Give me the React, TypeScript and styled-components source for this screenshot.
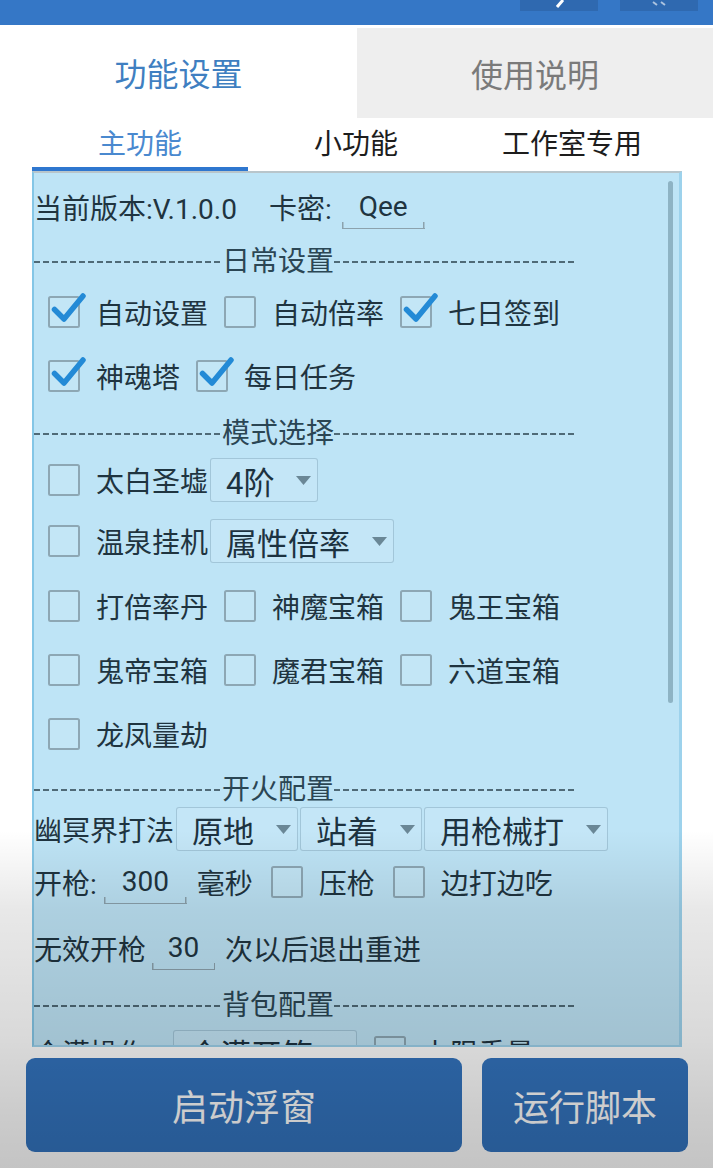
import React from 'react';
import styled, { createGlobalStyle } from 'styled-components';

const Global = createGlobalStyle`
  html, body { margin: 0; padding: 0; background: #ffffff; }
  body { font-family: Roboto, "Noto Sans CJK SC", sans-serif; }
  * { box-sizing: border-box; }
`;

const Page = styled.div`
  position: relative;
  width: 713px;
  height: 1168px;
  overflow: hidden;
  background: #ffffff;
  display: flex;
  flex-direction: column;
`;

const Shade = styled.div`
  position: absolute;
  inset: 0;
  pointer-events: none;
  background: linear-gradient(
    to bottom,
    rgba(0, 0, 0, 0) 0px,
    rgba(0, 0, 0, 0) 830px,
    rgba(0, 0, 0, 0.09) 910px,
    rgba(0, 0, 0, 0.15) 1040px,
    rgba(0, 0, 0, 0.2) 1110px,
    rgba(0, 0, 0, 0.23) 1168px
  );
`;

const TitleBar = styled.div`
  flex: 0 0 25px;
  background: #3577c6;
  display: flex;
  justify-content: flex-end;
  gap: 22px;
  padding-right: 15px;
`;

const TitleButton = styled.div`
  width: 78px;
  height: 11px;
  background: #2f69b0;
  display: flex;
  justify-content: center;
`;

const TabHeader = styled.div`
  flex: 0 0 93px;
  display: flex;
`;

const MainTab = styled.div<{ $active?: boolean }>`
  flex: 0 0 ${(p) => (p.$active ? '357px' : '356px')};
  margin-top: ${(p) => (p.$active ? '0' : '3px')};
  background: ${(p) => (p.$active ? '#ffffff' : '#eeeeee')};
  color: ${(p) => (p.$active ? '#3f7fc1' : '#7a7a7a')};
  font-size: 32px;
  display: flex;
  align-items: center;
  justify-content: center;
`;

const SubTabs = styled.div`
  flex: 0 0 53px;
  margin-left: 32px;
  width: 648px;
  display: flex;
`;

const SubTab = styled.div<{ $active?: boolean }>`
  flex: 1;
  display: flex;
  flex-direction: column;
  align-items: center;
  justify-content: flex-end;
  color: ${(p) => (p.$active ? '#4a89cf' : '#1d1d1d')};
  font-size: 28px;
`;

const SubLabel = styled.div`
  line-height: 38px;
  margin-bottom: 3px;
`;

const Indicator = styled.div<{ $active?: boolean }>`
  width: 100%;
  height: 4px;
  background: ${(p) => (p.$active ? '#2f77cf' : 'transparent')};
`;

const Panel = styled.div`
  position: relative;
  flex: 0 0 876px;
  margin-left: 32px;
  width: 650px;
  overflow: hidden;
  background: #bee4f6;
  border-left: 2px solid #84c6e6;
  border-right: 3px solid #9dd2ec;
  border-top: 2px solid #b8c5cb;
  border-bottom: 2px solid #9dd2ec;
  color: #1f3440;
  font-size: 28px;
  padding-top: 6px;
  display: flex;
  flex-direction: column;
`;

const ScrollThumb = styled.div`
  position: absolute;
  right: 6px;
  top: 8px;
  width: 5px;
  height: 522px;
  border-radius: 3px;
  background: #8eb3c4;
`;

const Row = styled.div<{ $h: number; $indent?: number; $gap?: number }>`
  flex: 0 0 ${(p) => p.$h}px;
  display: flex;
  align-items: center;
  white-space: nowrap;
  padding-left: ${(p) => p.$indent ?? 0}px;
  gap: ${(p) => p.$gap ?? 0}px;
`;

const Text = styled.span<{ $ml?: number }>`
  margin-left: ${(p) => p.$ml ?? 0}px;
`;

const SepLabel = styled.span`
  color: #2b4654;
`;

const DashLine = styled.span<{ $w: number }>`
  display: inline-block;
  width: ${(p) => p.$w}px;
  height: 2px;
  margin-top: 5px;
  background: repeating-linear-gradient(
    to right,
    #4f6a77 0px,
    #4f6a77 6px,
    transparent 6px,
    transparent 9px
  );
`;

const CheckItem = styled.label<{ $ml?: number }>`
  display: inline-flex;
  align-items: center;
  gap: 16px;
  margin-left: ${(p) => p.$ml ?? 0}px;
`;

const BoxSvg = styled.svg`
  flex: 0 0 32px;
  width: 32px;
  height: 32px;
  overflow: visible;
`;

const Select = styled.div<{ $ml?: number }>`
  display: inline-flex;
  align-items: center;
  height: 44px;
  padding: 0 6px 0 15px;
  gap: 22px;
  margin-left: ${(p) => p.$ml ?? 0}px;
  border: 1px solid rgba(120, 158, 180, 0.45);
  border-radius: 3px;
  background: rgba(255, 255, 255, 0.1);
  font-size: 31px;
  color: #1c3240;
`;

const CaretSvg = styled.svg`
  width: 15px;
  height: 9px;
`;

const Field = styled.div<{ $w: number; $ml?: number }>`
  width: ${(p) => p.$w}px;
  height: 44px;
  margin-left: ${(p) => p.$ml ?? 0}px;
  display: inline-flex;
  align-items: center;
  justify-content: center;
  border-bottom: 1.5px solid #8ca2ad;
  background:
    linear-gradient(#8ca2ad, #8ca2ad) left bottom / 1.5px 6px no-repeat,
    linear-gradient(#8ca2ad, #8ca2ad) right bottom / 1.5px 6px no-repeat;
`;

const Footer = styled.div`
  display: flex;
  gap: 20px;
  padding: 11px 25px 0 26px;
`;

const BigButton = styled.button<{ $w: number }>`
  width: ${(p) => p.$w}px;
  height: 94px;
  border: none;
  border-radius: 9px;
  background: #3374bf;
  color: #ffffff;
  font-size: 36px;
  font-family: Roboto, "Noto Sans CJK SC", sans-serif;
  display: flex;
  align-items: center;
  justify-content: center;
  padding: 0;
`;

const Box = ({ checked }: { checked?: boolean }) => (
  <BoxSvg viewBox="0 0 32 32">
    <rect x="1" y="1" width="30" height="30" rx="1.5" fill="rgba(255,255,255,0.08)" stroke="#8da7b4" strokeWidth="2" />
    {checked && (
      <path d="M6.5 13.5 L16 23 L35 0" fill="none" stroke="#238ad6" strokeWidth="5.5" strokeLinecap="round" strokeLinejoin="round" />
    )}
  </BoxSvg>
);

const Check = ({ label, checked, ml }: { label: string; checked?: boolean; ml?: number }) => (
  <CheckItem $ml={ml}>
    <Box checked={checked} />
    <span>{label}</span>
  </CheckItem>
);

const Caret = () => (
  <CaretSvg viewBox="0 0 15 9">
    <path d="M0 0 H15 L7.5 9 Z" fill="#6a8796" />
  </CaretSvg>
);

const Drop = ({ value, ml }: { value: string; ml?: number }) => (
  <Select $ml={ml}>
    <span>{value}</span>
    <Caret />
  </Select>
);

const Separator = ({ label, h }: { label: string; h: number }) => (
  <Row $h={h}>
    <DashLine $w={188} />
    <SepLabel>{label}</SepLabel>
    <DashLine $w={240} />
  </Row>
);

export default function App() {
  return (
    <Page>
      <Global />
      <TitleBar>
        <TitleButton>
          <svg width="20" height="8" viewBox="0 0 20 8">
            <path d="M8 7 L14 0" stroke="#ffffff" strokeWidth="3" />
          </svg>
        </TitleButton>
        <TitleButton>
          <svg width="20" height="8" viewBox="0 0 20 8">
            <path d="M4 2 L8 5 M12 2 L16 5" stroke="rgba(255,255,255,0.6)" strokeWidth="2" />
          </svg>
        </TitleButton>
      </TitleBar>

      <TabHeader>
        <MainTab $active>功能设置</MainTab>
        <MainTab>使用说明</MainTab>
      </TabHeader>

      <SubTabs>
        <SubTab $active>
          <SubLabel>主功能</SubLabel>
          <Indicator $active />
        </SubTab>
        <SubTab>
          <SubLabel>小功能</SubLabel>
          <Indicator />
        </SubTab>
        <SubTab>
          <SubLabel>工作室专用</SubLabel>
          <Indicator />
        </SubTab>
      </SubTabs>

      <Panel>
        <Row $h={56}>
          <Text>当前版本:V.1.0.0</Text>
          <Text $ml={32}>卡密:</Text>
          <Field $w={83} $ml={10}>Qee</Field>
        </Row>
        <Separator label="日常设置" h={48} />
        <Row $h={58} $indent={14} $gap={16}>
          <Check label="自动设置" checked />
          <Check label="自动倍率" />
          <Check label="七日签到" checked />
        </Row>
        <Row $h={70} $indent={14} $gap={16}>
          <Check label="神魂塔" checked />
          <Check label="每日任务" checked />
        </Row>
        <Separator label="模式选择" h={40} />
        <Row $h={58} $indent={14}>
          <Check label="太白圣墟" />
          <Drop value="4阶" ml={2} />
        </Row>
        <Row $h={64} $indent={14}>
          <Check label="温泉挂机" />
          <Drop value="属性倍率" ml={2} />
        </Row>
        <Row $h={66} $indent={14} $gap={16}>
          <Check label="打倍率丹" />
          <Check label="神魔宝箱" />
          <Check label="鬼王宝箱" />
        </Row>
        <Row $h={62} $indent={14} $gap={16}>
          <Check label="鬼帝宝箱" />
          <Check label="魔君宝箱" />
          <Check label="六道宝箱" />
        </Row>
        <Row $h={66} $indent={14}>
          <Check label="龙凤量劫" />
        </Row>
        <Separator label="开火配置" h={40} />
        <Row $h={44} $gap={2}>
          <Text>幽冥界打法</Text>
          <Drop value="原地" />
          <Drop value="站着" />
          <Drop value="用枪械打" />
        </Row>
        <Row $h={62}>
          <Text>开枪:</Text>
          <Field $w={83} $ml={7}>300</Field>
          <Text $ml={10}>毫秒</Text>
          <Check label="压枪" ml={18} />
          <Check label="边打边吃" ml={18} />
        </Row>
        <Row $h={70}>
          <Text>无效开枪</Text>
          <Field $w={63} $ml={6}>30</Field>
          <Text $ml={10}>次以后退出重进</Text>
        </Row>
        <Separator label="背包配置" h={36} />
        <Row $h={58}>
          <Text>仓满操作</Text>
          <Drop value="仓满开箱" ml={27} />
          <Check label="上限重量" ml={17} />
        </Row>
        <ScrollThumb />
      </Panel>

      <Footer>
        <BigButton $w={436}>启动浮窗</BigButton>
        <BigButton $w={206}>运行脚本</BigButton>
      </Footer>
      <Shade />
    </Page>
  );
}
